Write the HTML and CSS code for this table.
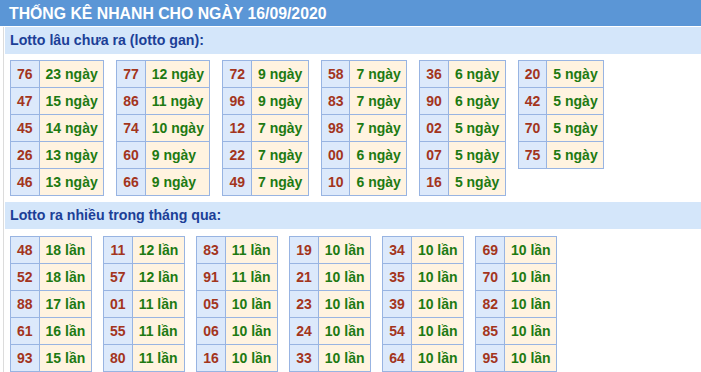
FILE: index.html
```html
<!DOCTYPE html>
<html lang="vi">
<head>
<meta charset="utf-8">
<title>Thống kê nhanh</title>
<link rel="stylesheet" href="styles.css">
</head>
<body>
<div class="title">THỐNG KÊ NHANH CHO NGÀY 16/09/2020</div>
<div class="box">
  <div class="band">Lotto lâu chưa ra (lotto gan):</div>
  <div class="tables">
    <table><tr><td class="n">76</td><td class="v">23 ngày</td></tr><tr><td class="n">47</td><td class="v">15 ngày</td></tr><tr><td class="n">45</td><td class="v">14 ngày</td></tr><tr><td class="n">26</td><td class="v">13 ngày</td></tr><tr><td class="n">46</td><td class="v">13 ngày</td></tr></table>
    <table><tr><td class="n">77</td><td class="v">12 ngày</td></tr><tr><td class="n">86</td><td class="v">11 ngày</td></tr><tr><td class="n">74</td><td class="v">10 ngày</td></tr><tr><td class="n">60</td><td class="v">9 ngày</td></tr><tr><td class="n">66</td><td class="v">9 ngày</td></tr></table>
    <table><tr><td class="n">72</td><td class="v">9 ngày</td></tr><tr><td class="n">96</td><td class="v">9 ngày</td></tr><tr><td class="n">12</td><td class="v">7 ngày</td></tr><tr><td class="n">22</td><td class="v">7 ngày</td></tr><tr><td class="n">49</td><td class="v">7 ngày</td></tr></table>
    <table><tr><td class="n">58</td><td class="v">7 ngày</td></tr><tr><td class="n">83</td><td class="v">7 ngày</td></tr><tr><td class="n">98</td><td class="v">7 ngày</td></tr><tr><td class="n">00</td><td class="v">6 ngày</td></tr><tr><td class="n">10</td><td class="v">6 ngày</td></tr></table>
    <table><tr><td class="n">36</td><td class="v">6 ngày</td></tr><tr><td class="n">90</td><td class="v">6 ngày</td></tr><tr><td class="n">02</td><td class="v">5 ngày</td></tr><tr><td class="n">07</td><td class="v">5 ngày</td></tr><tr><td class="n">16</td><td class="v">5 ngày</td></tr></table>
    <table><tr><td class="n">20</td><td class="v">5 ngày</td></tr><tr><td class="n">42</td><td class="v">5 ngày</td></tr><tr><td class="n">70</td><td class="v">5 ngày</td></tr><tr><td class="n">75</td><td class="v">5 ngày</td></tr></table>
  </div>
  <div class="band">Lotto ra nhiều trong tháng qua:</div>
  <div class="tables tables2">
    <table><tr><td class="n">48</td><td class="v">18 lần</td></tr><tr><td class="n">52</td><td class="v">18 lần</td></tr><tr><td class="n">88</td><td class="v">17 lần</td></tr><tr><td class="n">61</td><td class="v">16 lần</td></tr><tr><td class="n">93</td><td class="v">15 lần</td></tr></table>
    <table><tr><td class="n">11</td><td class="v">12 lần</td></tr><tr><td class="n">57</td><td class="v">12 lần</td></tr><tr><td class="n">01</td><td class="v">11 lần</td></tr><tr><td class="n">55</td><td class="v">11 lần</td></tr><tr><td class="n">80</td><td class="v">11 lần</td></tr></table>
    <table><tr><td class="n">83</td><td class="v">11 lần</td></tr><tr><td class="n">91</td><td class="v">11 lần</td></tr><tr><td class="n">05</td><td class="v">10 lần</td></tr><tr><td class="n">06</td><td class="v">10 lần</td></tr><tr><td class="n">16</td><td class="v">10 lần</td></tr></table>
    <table><tr><td class="n">19</td><td class="v">10 lần</td></tr><tr><td class="n">21</td><td class="v">10 lần</td></tr><tr><td class="n">23</td><td class="v">10 lần</td></tr><tr><td class="n">24</td><td class="v">10 lần</td></tr><tr><td class="n">33</td><td class="v">10 lần</td></tr></table>
    <table><tr><td class="n">34</td><td class="v">10 lần</td></tr><tr><td class="n">35</td><td class="v">10 lần</td></tr><tr><td class="n">39</td><td class="v">10 lần</td></tr><tr><td class="n">54</td><td class="v">10 lần</td></tr><tr><td class="n">64</td><td class="v">10 lần</td></tr></table>
    <table><tr><td class="n">69</td><td class="v">10 lần</td></tr><tr><td class="n">70</td><td class="v">10 lần</td></tr><tr><td class="n">82</td><td class="v">10 lần</td></tr><tr><td class="n">85</td><td class="v">10 lần</td></tr><tr><td class="n">95</td><td class="v">10 lần</td></tr></table>
  </div>
</div>
</body>
</html>
```

FILE: styles.css
```css
html, body {
  margin: 0;
  padding: 0;
  background: #fff;
  font-family: "Liberation Sans", Arial, sans-serif;
  font-weight: bold;
  font-size: 14px;
}
.title {
  height: 26px;
  line-height: 27px;
  background: #5b96d6;
  color: #fff;
  padding-left: 9px;
  font-size: 15.8px;
}
.box {
  margin: 1px 0 0 3px;
  border-left: 1px solid #dcdcdc;
  padding-left: 1px;
  padding-bottom: 4px;
}
.band {
  height: 27px;
  line-height: 27px;
  background: #d4e6fa;
  color: #1c3f97;
  padding-left: 5px;
  font-size: 14.2px;
}
.tables {
  display: flex;
  align-items: flex-start;
  gap: 12px;
  padding: 6px 0 6px 5px;
}
.tables2 {
  gap: 11px;
  padding-top: 7px;
  padding-bottom: 0;
}
table {
  border-collapse: collapse;
}
td {
  height: 26px;
  padding: 0 6px;
  border: 1px solid #98b4e2;
}
.n {
  background: #dce9fb;
  color: #a3351d;
  text-align: center;
}
.v {
  background: #fff3e0;
  color: #1d7a12;
  padding-right: 5.5px;
}
.tables2 .v {
  padding-right: 5.8px;
}
```
